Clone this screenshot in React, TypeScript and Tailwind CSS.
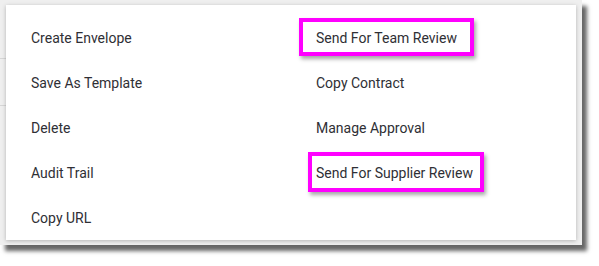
type Item = {
  label: string;
  mark?: string;
};

const left: Item[] = [
  { label: "Create Envelope" },
  { label: "Save As Template" },
  { label: "Delete" },
  { label: "Audit Trail" },
  { label: "Copy URL" },
];

const right: Item[] = [
  { label: "Send For Team Review", mark: "-left-[17px] -right-[17px] -top-[10px] -bottom-[8px]" },
  { label: "Copy Contract" },
  { label: "Manage Approval" },
  { label: "Send For Supplier Review", mark: "-left-[8px] -right-[11px] -top-[11px] -bottom-[9px]" },
];

function Column({ items }: { items: Item[] }) {
  return (
    <ul className="flex flex-col">
      {items.map((it) => (
        <li key={it.label} className="flex h-[45px] items-center px-[25px]">
          <span className="relative leading-5">
            {it.label}
            {it.mark && (
              <span
                className={`pointer-events-none absolute ${it.mark} border-[4px] border-[#ff00ff] shadow-[2px_3px_4px_rgba(0,0,0,0.35)]`}
              />
            )}
          </span>
        </li>
      ))}
    </ul>
  );
}

export default function App() {
  return (
    <div className="h-[266px] w-[599px] bg-white">
      <div className="relative h-[245px] w-[582px] bg-[#efefef] shadow-[5px_6px_4px_rgba(0,0,0,0.6)]">
        {/* faint table rows behind the menu */}
        <div className="absolute left-0 top-[58px] h-px w-[6px] bg-[#d6d6d6]" />
        <div className="absolute left-0 top-[105px] h-px w-[6px] bg-[#d6d6d6]" />
        <div className="absolute left-[6px] top-[5px] grid h-[235px] w-[570px] grid-cols-2 bg-white pt-[10px] font-['Roboto',sans-serif] text-[14px] text-[#2f2f35] shadow-[0_1px_4px_rgba(0,0,0,0.25)]">
          <Column items={left} />
          <Column items={right} />
        </div>
      </div>
    </div>
  );
}
